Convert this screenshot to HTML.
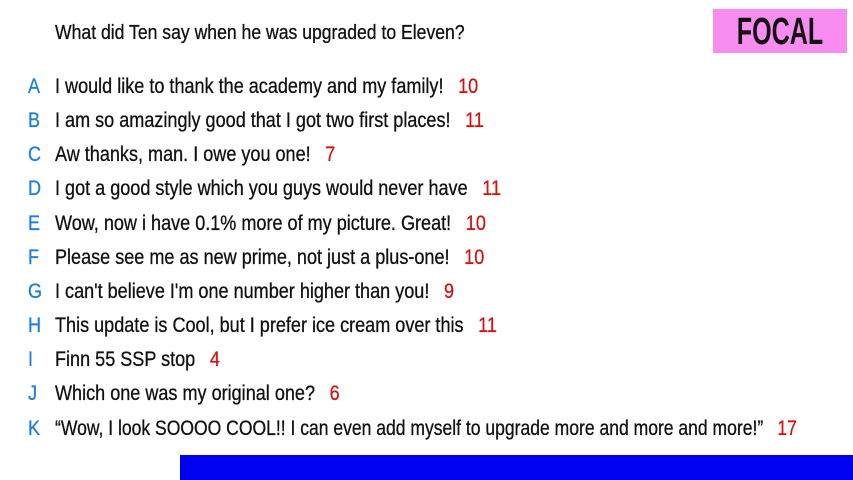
<!DOCTYPE html>
<html><head><meta charset="utf-8"><style>
html,body{margin:0;padding:0;background:#fff;width:853px;height:480px;overflow:hidden;position:relative}
body{font-family:"Liberation Sans",sans-serif;color:#111}
.q{position:absolute;left:55px;top:22px;font-size:20px;white-space:nowrap;transform:scaleX(0.88);transform-origin:0 0;-webkit-text-stroke:0.3px #111}
.row{position:absolute;left:0;font-size:21px;white-space:nowrap;height:26px;line-height:26px}
.l{position:absolute;left:28px;color:#1e80d8;transform:scaleX(0.86);transform-origin:0 0;-webkit-text-stroke:0.3px #1e80d8}
.t{position:absolute;left:55px;transform:scaleX(0.86);transform-origin:0 0;-webkit-text-stroke:0.3px #111}
.n{color:#d01515;margin-left:17px;-webkit-text-stroke:0.3px #d01515}
.focal{position:absolute;left:713px;top:9px;width:134px;height:44px;background:#f98cf0}
.focal span{position:absolute;left:67px;top:0;line-height:46px;font-size:38px;font-weight:bold;color:#111;transform:translateX(-50%) scaleX(0.66);white-space:nowrap}
.bar{position:absolute;left:180px;top:455px;width:673px;height:25px;background:#0000f0}
</style></head><body>
<div class="q">What did Ten say when he was upgraded to Eleven?</div>
<div class="focal"><span>FOCAL</span></div>
<div class="row" style="top:74px"><span class="l">A</span><span class="t">I would like to thank the academy and my family!<span class="n">10</span></span></div>
<div class="row" style="top:108px"><span class="l">B</span><span class="t">I am so amazingly good that I got two first places!<span class="n">11</span></span></div>
<div class="row" style="top:142px"><span class="l">C</span><span class="t">Aw thanks, man. I owe you one!<span class="n">7</span></span></div>
<div class="row" style="top:176px"><span class="l">D</span><span class="t">I got a good style which you guys would never have<span class="n">11</span></span></div>
<div class="row" style="top:211px"><span class="l">E</span><span class="t">Wow, now i have 0.1% more of my picture. Great!<span class="n">10</span></span></div>
<div class="row" style="top:245px"><span class="l">F</span><span class="t">Please see me as new prime, not just a plus-one!<span class="n">10</span></span></div>
<div class="row" style="top:279px"><span class="l">G</span><span class="t">I can't believe I'm one number higher than you!<span class="n">9</span></span></div>
<div class="row" style="top:313px"><span class="l">H</span><span class="t">This update is Cool, but I prefer ice cream over this<span class="n">11</span></span></div>
<div class="row" style="top:347px"><span class="l">I</span><span class="t">Finn 55 SSP stop<span class="n">4</span></span></div>
<div class="row" style="top:381px"><span class="l">J</span><span class="t">Which one was my original one?<span class="n">6</span></span></div>
<div class="row" style="top:416px"><span class="l">K</span><span class="t" style="transform:scaleX(0.835)">“Wow, I look SOOOO COOL!! I can even add myself to upgrade more and more and more!”<span class="n">17</span></span></div>
<div class="bar"></div>
</body></html>
